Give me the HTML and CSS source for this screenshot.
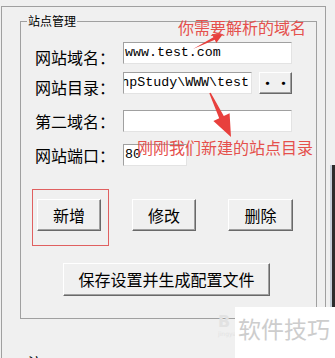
FILE: index.html
```html
<!DOCTYPE html>
<html lang="zh-CN">
<head>
<meta charset="utf-8">
<title>站点管理</title>
<link rel="stylesheet" href="styles.css">
</head>
<body>
<div class="page">
  <div class="frame">
    <fieldset class="group">
      <legend>站点管理</legend>
      <div class="row r1"><span class="lbl low">网站域名：</span><div class="field w-full">www.test.com</div></div>
      <div class="row r2"><span class="lbl low">网站目录：</span><div class="field w-dir"><span>D:\phpStudy\WWW\test</span></div><button class="btn dots">· ·</button></div>
      <div class="row r3"><span class="lbl">第二域名：</span><div class="field w-full"></div></div>
      <div class="row r4"><span class="lbl">网站端口：</span><div class="field w-port">80</div></div>
      <div class="actions">
        <div class="mark"><button class="btn act">新增</button></div>
        <button class="btn act b2">修改</button>
        <button class="btn act b3">删除</button>
      </div>
      <div class="save-row"><button class="btn save">保存设置并生成配置文件</button></div>
    </fieldset>
    <div class="note">注：</div>
  </div>
  <div class="edge"></div>

  <svg class="arrows" width="335" height="358" viewBox="0 0 335 358" aria-hidden="true">
    <polygon points="193,49 213.4,37.2 211.9,34 223,34 216.3,43 214.8,39.8" fill="#e8403d"/>
    <polygon points="209.3,93.3 210.7,92.7 223.8,116.1 229.6,113.3 231,137 213.4,121.1 219.2,118.3" fill="#e8403d"/>
  </svg>
  <div class="anno a1">你需要解析的域名</div>
  <div class="anno a2">刚刚我们新建的站点目录</div>

  <div class="wm-logo">B<span>jingyan</span></div>
  <div class="wm">软件技巧</div>
</div>
</body>
</html>
```
FILE: styles.css
```css
html, body {
  margin: 0;
  padding: 0;
}
body {
  background: #f0f0f0;
  font-family: "Noto Sans CJK SC", "Noto Sans", sans-serif;
  color: #000;
}
.page {
  position: relative;
  width: 335px;
  height: 358px;
  overflow: hidden;
  display: flex;
  align-items: flex-start;
}
.frame {
  box-sizing: border-box;
  width: 325px;
  height: 400px;
  margin: 6px 0 0 1px;
  border-top: 1px solid #a0a0a0;
  border-left: 1px solid #a0a0a0;
  border-right: 1px solid #a0a0a0;
  display: flex;
  flex-direction: column;
}
.group {
  box-sizing: border-box;
  width: 297px;
  height: 305px;
  margin: 7px 0 0 18px;
  padding: 0;
  border: 1px solid #a0a0a0;
  min-width: 0;
}
.group legend {
  font-size: 12px;
  line-height: 14px;
  margin-left: 6px;
  padding: 0 1px;
}
.row {
  display: flex;
  align-items: center;
  height: 22px;
  padding-left: 14px;
}
.r1 { margin-top: 14px; }
.r2 { margin-top: 8px; }
.r3 { margin-top: 16px; }
.r4 { margin-top: 12px; }
.lbl {
  width: 88px;
  font-size: 16px;
  line-height: 16px;
  white-space: nowrap;
  flex: none;
}
.lbl.low { padding-top: 7px; }
.field {
  box-sizing: border-box;
  height: 22px;
  background: #fff;
  border: 1px solid;
  border-color: #a0a0a0 #e3e3e3 #e3e3e3 #a0a0a0;
  font-family: "Liberation Mono", monospace;
  font-size: 13.3px;
  line-height: 20px;
  padding: 0 1px;
  white-space: nowrap;
  overflow: hidden;
  flex: none;
}
.w-full { width: 169px; }
.w-dir {
  width: 129px;
  display: flex;
  justify-content: flex-end;
  padding-right: 2px;
}
.w-dir span { flex: none; }
.w-port { width: 64px; }
.btn {
  box-sizing: border-box;
  background: #f0f0f0;
  border: 1px solid;
  border-color: #fff #696969 #696969 #fff;
  box-shadow: inset -1px -1px 0 #a0a0a0;
  font-family: "Noto Sans CJK SC", "Noto Sans", sans-serif;
  font-size: 16px;
  color: #000;
  padding: 0;
  margin: 0;
  flex: none;
}
.dots {
  width: 33px;
  height: 22px;
  margin-left: 7px;
  font-size: 13px;
  font-weight: bold;
  line-height: 18px;
}
.actions {
  display: flex;
  align-items: flex-start;
  margin-top: 33px;
  padding-left: 16px;
  height: 32px;
}
.act {
  width: 64px;
  height: 32px;
  line-height: 28px;
}
.b2 { margin-left: 31px; }
.b3 { margin-left: 32px; width: 65px; }
.mark {
  border: 1px solid #e06060;
  padding: 9px 7px 14px 4px;
  margin: -10px -8px -15px -5px;
  display: flex;
}
.save-row {
  margin-top: 32px;
  padding-left: 42px;
  display: flex;
}
.save {
  width: 207px;
  height: 33px;
  line-height: 29px;
}
.note {
  margin: 35px 0 0 26px;
  font-size: 14px;
  line-height: 16px;
}
.edge {
  flex: none;
  width: 9px;
  height: 200px;
  margin-top: 165px;
  background: linear-gradient(to right, #f0f0f0 0 4px, #c3cdd8 4px 6px, #2c2c2c 6px 9px);
}
.arrows {
  position: absolute;
  left: 0;
  top: 0;
}
.anno {
  position: absolute;
  font-size: 16px;
  line-height: 16px;
  color: #e5504c;
  white-space: nowrap;
}
.a1 { left: 178px; top: 19px; }
.a2 { left: 137px; top: 139px; }
.wm {
  position: absolute;
  left: 235px;
  top: 307px;
  width: 100px;
  height: 51px;
  background: #fff;
  color: #cdcdcd;
  font-size: 23px;
  line-height: 23px;
  padding: 10px 0 0 3px;
  box-sizing: border-box;
  white-space: nowrap;
  overflow: hidden;
}
.wm-logo {
  position: absolute;
  left: 218px;
  top: 314px;
  font-family: "DejaVu Sans", sans-serif;
  font-weight: bold;
  font-size: 16px;
  line-height: 16px;
  color: #e2e2e2;
}
.wm-logo span {
  display: block;
  font-size: 6px;
  line-height: 8px;
  font-weight: normal;
}
```
